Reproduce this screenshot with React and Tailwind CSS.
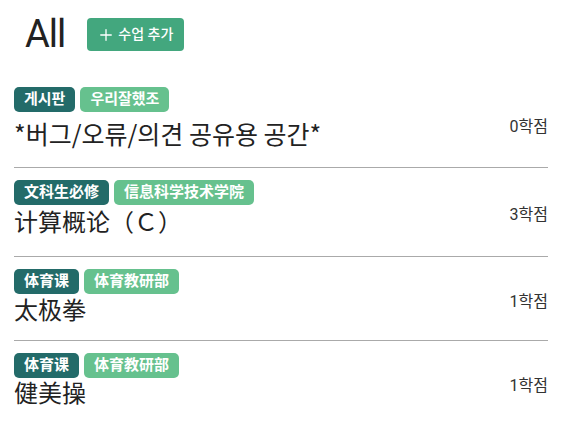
import { Plus } from "lucide-react";

const courses = [
  {
    type: "게시판",
    dept: "우리잘했조",
    name: "*버그/오류/의견 공유용 공간*",
    credit: "0학점",
    title: "text-[25px] leading-[42px]",
    pad: "pb-[13px]",
  },
  {
    type: "文科生必修",
    dept: "信息科学技术学院",
    name: "计算概论（Ｃ）",
    credit: "3학점",
    title: "text-[24px] leading-[32px]",
    pad: "pb-[19px]",
  },
  {
    type: "体育课",
    dept: "体育教研部",
    name: "太极拳",
    credit: "1학점",
    title: "text-[24px] leading-[29px]",
    pad: "pb-[17px]",
  },
  {
    type: "体育课",
    dept: "体育教研部",
    name: "健美操",
    credit: "1학점",
    title: "text-[24px] leading-[28px]",
    pad: "pb-[21px]",
  },
];

export default function App() {
  return (
    <div
      className="w-[562px] h-[425px] bg-white overflow-hidden px-[14px] text-[#222]"
      style={{ fontFamily: "Roboto, 'Noto Sans CJK KR', 'Noto Sans CJK SC', sans-serif" }}
    >
      {/* Header */}
      <div className="flex items-start pt-[18px] h-[75px]">
        <h1 className="text-[38px] leading-[33px] ml-[11px] mr-[22px] tracking-[-1px]">All</h1>
        <button className="flex items-center gap-[3px] h-[33px] pl-[10px] pr-[11px] rounded-[4px] bg-[#43a77e] text-white text-[14px] font-medium">
          <Plus className="w-[18px] h-[18px]" strokeWidth={1.75} />
          <span>수업 추가</span>
        </button>
      </div>

      {/* Course list */}
      <div>
        {courses.map((c, i) => (
          <div key={i} className={`border-b border-[#aaaaaa] pt-[12px] ${c.pad}`}>
            <div className="flex gap-[5px]">
              <span className="h-[25px] px-[10px] rounded-[5px] bg-[#236b69] text-white text-[15px] font-bold flex items-center">
                {c.type}
              </span>
              <span className="h-[25px] px-[10px] rounded-[5px] bg-[#66c18e] text-white text-[15px] font-bold flex items-center">
                {c.dept}
              </span>
            </div>
            <div className="flex justify-between items-center">
              <div
                className={c.title}
                style={{ fontFamily: "'Noto Sans CJK SC', sans-serif" }}
              >
                {c.name}
              </div>
              <div className="h-[20px] text-[16px] leading-[20px] text-[#333] -mt-[13px]">{c.credit}</div>
            </div>
          </div>
        ))}
      </div>
    </div>
  );
}
